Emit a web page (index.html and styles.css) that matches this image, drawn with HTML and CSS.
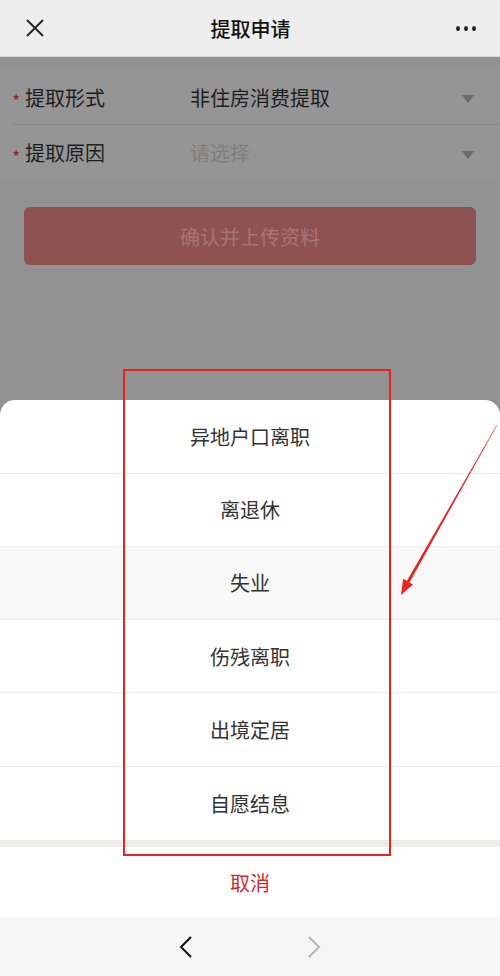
FILE: index.html
```html
<html>
<head>
    <meta charset="utf-8">
    <title>提取申请</title>
    <link rel="stylesheet" href="styles.css">
</head>
<body>
<div class="phone">

    <div class="topBar">
        <span class="closeBtn">
            <svg width="20" height="20" viewBox="0 0 20 20"><path d="M2 2 L18 18 M18 2 L2 18" stroke="#222" stroke-width="1.8" fill="none"/></svg>
        </span>
        <span class="title">提取申请</span>
        <span class="moreBtn"><i></i><i></i><i></i></span>
    </div>

    <div class="page">
        <div class="form">
            <div class="row">
                <span class="star">*</span>
                <span class="label">提取形式</span>
                <span class="value">非住房消费提取</span>
                <span class="caret"></span>
            </div>
            <div class="row">
                <span class="star">*</span>
                <span class="label">提取原因</span>
                <span class="value placeholder">请选择</span>
                <span class="caret"></span>
            </div>
        </div>

        <div class="submitBtn">确认并上传资料</div>

        <div class="sheet">
            <div class="item">异地户口离职</div>
            <div class="item">离退休</div>
            <div class="item active">失业</div>
            <div class="item">伤残离职</div>
            <div class="item">出境定居</div>
            <div class="item">自愿结息</div>
            <div class="sheetGap"></div>
            <div class="cancel">取消</div>
        </div>
    </div>

    <div class="navBar">
        <svg width="16" height="24" viewBox="0 0 16 24"><path d="M13 2 L3 12 L13 22" stroke="#111" stroke-width="2" fill="none"/></svg>
        <svg width="16" height="24" viewBox="0 0 16 24"><path d="M3 2 L13 12 L3 22" stroke="#b5b5b5" stroke-width="2" fill="none"/></svg>
    </div>

    <!-- annotation drawn over the screenshot -->
    <div class="markBox"></div>
    <svg class="markArrow" width="500" height="976" viewBox="0 0 500 976">
        <polygon points="497.4,424.8 496.6,425.2 406.7,581.3 409.3,582.7" fill="#e8231e"/>
        <polygon points="401,595 403.2,578.8 413,584.4" fill="#e8231e"/>
    </svg>

</div>
</body>
</html>
```

FILE: styles.css
```css
* {
    box-sizing: border-box;
}

body {
    margin: 0;
    font-family: "Noto Sans CJK SC", "Noto Sans", sans-serif;
}

.phone {
    position: relative;
    width: 500px;
    height: 976px;
    display: flex;
    flex-direction: column;
    overflow: hidden;
}

/* Top bar */
.topBar {
    height: 57px;
    background-color: #ededed;
    border-bottom: 1px solid #d6d6d6;
    display: flex;
    align-items: center;
    justify-content: space-between;
    padding: 0 24px 0 25px;
}
.closeBtn {
    width: 20px;
    height: 20px;
    display: flex;
}
.title {
    font-size: 20px;
    font-weight: 500;
    color: #111;
}
.moreBtn {
    display: flex;
    gap: 4px;
    width: 20px;
}
.moreBtn i {
    width: 5px;
    height: 5px;
    border-radius: 50%;
    background-color: #222;
}

/* Dimmed page */
.page {
    flex: 1;
    background-color: #929292;
    display: flex;
    flex-direction: column;
    padding-top: 13px;
}
.form {
    background-color: #959595;
}
.row {
    height: 55px;
    display: flex;
    align-items: center;
    margin-left: 12px;
    padding-right: 26px;
    border-bottom: 1px solid #8a8a8a;
    font-size: 20px;
}
.row:last-child {
    border-bottom: none;
}
.star {
    color: #8f2222;
    font-size: 18px;
    width: 13px;
    padding-top: 6px;
}
.label {
    color: #1e1e1e;
    width: 165px;
}
.value {
    flex: 1;
    color: #1e1e1e;
}
.placeholder {
    color: #7e7e7e;
}
.caret {
    width: 0;
    height: 0;
    border-left: 6px solid transparent;
    border-right: 6px solid transparent;
    border-top: 8px solid #6c6c6c;
    margin-top: 4px;
}

.submitBtn {
    margin: 27px 24px 0 24px;
    height: 58px;
    border-radius: 6px;
    background-color: #8e5252;
    color: #a67676;
    font-size: 20px;
    display: flex;
    align-items: center;
    justify-content: center;
}

/* Action sheet */
.sheet {
    margin-top: auto;
    background-color: #fff;
    border-radius: 15px 15px 0 0;
    overflow: hidden;
}
.item {
    height: 73.3px;
    display: flex;
    align-items: center;
    justify-content: center;
    font-size: 20px;
    color: #333;
    border-bottom: 1px solid #ebebeb;
}
.item.active {
    background-color: #f8f8f8;
}
.item:nth-child(6) {
    border-bottom: none;
}
.sheetGap {
    height: 7px;
    background-color: #eeece9;
}
.cancel {
    height: 70px;
    display: flex;
    align-items: center;
    justify-content: center;
    font-size: 20px;
    color: #d3262b;
}

/* Bottom browser bar */
.navBar {
    height: 59px;
    background-color: #f6f6f6;
    display: flex;
    align-items: center;
    justify-content: center;
    gap: 112px;
}

/* Annotation */
.markBox {
    position: absolute;
    left: 123px;
    top: 369px;
    width: 268px;
    height: 487px;
    border: 2px solid #e8231e;
}
.markArrow {
    position: absolute;
    left: 0;
    top: 0;
    pointer-events: none;
}
```
